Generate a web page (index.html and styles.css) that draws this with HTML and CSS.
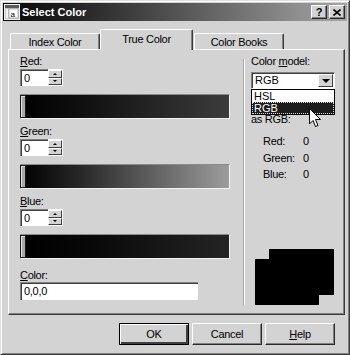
FILE: index.html
```html
<!DOCTYPE html>
<html>
<head>
    <title>Select Color</title>
    <meta charset="UTF-8">
    <link rel="stylesheet" href="styles.css">
</head>
<body>
    <div class="window">
        <div class="titlebar">
            <svg class="app-icon" width="16" height="16" viewBox="0 0 16 16">
                <rect x="0.5" y="0.5" width="15" height="15" fill="#c8c8c8" stroke="#f0f0f0"/>
                <rect x="1" y="1" width="14" height="3" fill="#5a5a5a"/>
                <rect x="2" y="5" width="2" height="9" fill="#f4f4f4"/>
                <rect x="5" y="5" width="9" height="9" fill="#ffffff" stroke="#777" stroke-width="0.5"/>
                <text x="6.5" y="12.5" font-family="Liberation Sans, sans-serif" font-size="8" fill="#000">a</text>
            </svg>
            <span class="title">Select Color</span>
            <div class="title-btns">
                <span class="tbtn">?</span>
                <span class="tbtn">
                    <svg width="8" height="7" viewBox="0 0 8 7"><path d="M0.5 0.5 L7.5 6.5 M7.5 0.5 L0.5 6.5" stroke="#000" stroke-width="1.6"/></svg>
                </span>
            </div>
        </div>

        <div class="tabs">
            <div class="tab">Index Color</div>
            <div class="tab active">True Color</div>
            <div class="tab">Color Books</div>
        </div>

        <div class="panel">
            <div class="left">
                <div class="channel">
                    <div class="field-label"><u>R</u>ed:</div>
                    <div class="spinner">
                        <div class="spin-input">0</div>
                        <div class="spin-btns"><span class="spin up"></span><span class="spin down"></span></div>
                    </div>
                    <div class="bar bar-red"><span class="thumb"></span></div>
                </div>
                <div class="channel">
                    <div class="field-label"><u>G</u>reen:</div>
                    <div class="spinner">
                        <div class="spin-input">0</div>
                        <div class="spin-btns"><span class="spin up"></span><span class="spin down"></span></div>
                    </div>
                    <div class="bar bar-green"><span class="thumb"></span></div>
                </div>
                <div class="channel">
                    <div class="field-label"><u>B</u>lue:</div>
                    <div class="spinner">
                        <div class="spin-input">0</div>
                        <div class="spin-btns"><span class="spin up"></span><span class="spin down"></span></div>
                    </div>
                    <div class="bar bar-blue"><span class="thumb"></span></div>
                </div>
                <div class="field-label color-label"><u>C</u>olor:</div>
                <div class="color-input">0,0,0</div>
            </div>

            <div class="sep"></div>

            <div class="right">
                <div class="field-label">Color <u>m</u>odel:</div>
                <div class="combo-wrap">
                    <div class="combo">
                        <span class="combo-text">RGB</span>
                        <span class="drop-btn"></span>
                    </div>
                    <div class="combo-list">
                        <div class="opt">HSL</div>
                        <div class="opt selected">RGB</div>
                    </div>
                    <svg class="cursor" width="13" height="20" viewBox="0 0 13 20">
                        <path d="M0.5 0.5 L0.5 16 L4 12.5 L6.5 18.5 L9 17.5 L6.5 11.5 L11.5 11.5 Z" fill="#fff" stroke="#000" stroke-width="1"/>
                    </svg>
                </div>
                <div class="as-rgb">as RGB:</div>
                <div class="rgb-values">
                    <span>Red:</span><span>0</span>
                    <span>Green:</span><span>0</span>
                    <span>Blue:</span><span>0</span>
                </div>
                <div class="preview">
                    <div class="swatch swatch-new"></div>
                    <div class="swatch swatch-old"></div>
                </div>
            </div>
        </div>

        <div class="buttons">
            <button class="btn default">OK</button>
            <button class="btn">Cancel</button>
            <button class="btn"><u>H</u>elp</button>
        </div>
    </div>
</body>
</html>
```

FILE: styles.css
```css
* { margin: 0; padding: 0; box-sizing: border-box; }
body { font-family: 'Liberation Sans', Arial, sans-serif; font-size: 11px; letter-spacing: -0.3px; color: #000; background: #d3d3d3; }
u { text-decoration: underline; text-underline-offset: 1px; }

.window { width: 350px; height: 355px; background: #d3d3d3; padding: 2px; border-top: 1px solid #e0e0e0; border-left: 1px solid #e0e0e0; border-right: 1px solid #3a3a3a; border-bottom: 1px solid #3a3a3a; box-shadow: inset 1px 1px #fff, inset -1px -1px #808080; display: flex; flex-direction: column; }

/* title bar */
.titlebar { height: 18px; display: flex; align-items: center; padding: 0 2px 0 1px; background: linear-gradient(to right, #080808, #1e1e1e 18%, #a6a6a6); }
.app-icon { flex: none; }
.title { color: #fff; font-weight: bold; font-size: 11px; letter-spacing: 0; margin-left: 2px; }
.title-btns { margin-left: auto; display: flex; gap: 2px; }
.tbtn { width: 16px; height: 14px; background: #d3d3d3; display: flex; align-items: center; justify-content: center; font-weight: bold; font-size: 11px; letter-spacing: 0; border-top: 1px solid #fff; border-left: 1px solid #fff; border-right: 1px solid #2a2a2a; border-bottom: 1px solid #2a2a2a; box-shadow: inset -1px -1px #808080; }

/* tabs */
.tabs { display: flex; align-items: flex-end; margin-top: 8px; padding-left: 7px; height: 20px; position: relative; z-index: 1; }
.tab { height: 16px; width: 90px; display: flex; align-items: center; justify-content: center; border-top: 1px solid #fff; border-left: 1px solid #fff; border-right: 1px solid #3a3a3a; border-radius: 2px 2px 0 0; box-shadow: inset -1px 0 #808080; padding-top: 1px; }
.tab.active { height: 21px; width: 93px; margin-bottom: -1px; background: #d3d3d3; padding-top: 0; padding-bottom: 3px; }
.tab:last-child { width: 90px; margin-left: 1px; }

/* panel */
.panel { margin: 0 2px 0 5px; height: 266px; display: flex; border-top: 1px solid #fff; border-left: 1px solid #fff; border-right: 1px solid #3a3a3a; border-bottom: 1px solid #3a3a3a; box-shadow: inset -1px -1px #808080; }

.left { width: 234px; padding: 5px 0 0 11px; }
.field-label { height: 13px; line-height: 13px; }
.channel { margin-bottom: 6px; }
.spinner { display: flex; width: 43px; height: 17px; margin-top: 1px; }
.spin-input { width: 28px; height: 17px; background: #fff; border-top: 1px solid #808080; border-left: 1px solid #808080; box-shadow: inset 1px 1px #404040; padding: 2px 0 0 3px; line-height: 12px; }
.spin-btns { width: 15px; display: flex; flex-direction: column; background: #fff; padding: 1px 1px 1px 0; }
.spin { flex: 1; background: #d3d3d3; border-top: 1px solid #fff; border-left: 1px solid #fff; border-right: 1px solid #404040; border-bottom: 1px solid #404040; display: flex; align-items: center; justify-content: center; }
.spin::after { content: ""; border-left: 2px solid transparent; border-right: 2px solid transparent; }
.spin.up::after { border-bottom: 2px solid #000; }
.spin.down::after { border-top: 2px solid #000; }

.bar { width: 210px; height: 25px; margin-top: 8px; display: flex; border-top: 1px solid #8a8a8a; border-left: 1px solid #8a8a8a; border-bottom: 1px solid #f4f4f4; border-right: 1px solid #f4f4f4; }
.bar-red { background: linear-gradient(to right, #000, #101010 30%, #3c3c3c); }
.bar-green { background: linear-gradient(to right, #000, #2a2a2a 30%, #9c9c9c); }
.bar-blue { background: linear-gradient(to right, #000, #070707 30%, #242424); }
.thumb { width: 6px; height: 100%; background: #a8a8a8; border: 1px solid #1a1a1a; box-shadow: inset 1px 1px #e0e0e0; margin-left: -1px; }

.color-label { margin-top: 10px; }
.color-input { width: 178px; height: 18px; background: #fff; border-top: 1px solid #808080; border-left: 1px solid #808080; box-shadow: inset 1px 1px #404040; padding: 2px 0 0 3px; line-height: 13px; }

.sep { width: 2px; margin: 9px 0 8px; border-left: 1px solid #a8a8a8; border-right: 1px solid #fff; }

.right { flex: 1; padding: 5px 0 9px 6px; display: flex; flex-direction: column; }
.combo-wrap { position: relative; margin-top: 4px; width: 84px; }
.combo { height: 17px; display: flex; background: #fff; border-top: 1px solid #808080; border-left: 1px solid #808080; border-right: 1px solid #fff; border-bottom: 1px solid #fff; box-shadow: inset 1px 1px #404040; padding: 1px 1px 1px 2px; }
.combo-text { flex: 1; line-height: 13px; padding-left: 1px; letter-spacing: 0; }
.drop-btn { width: 15px; background: #d3d3d3; border-top: 1px solid #fff; border-left: 1px solid #fff; border-right: 1px solid #404040; border-bottom: 1px solid #404040; display: flex; align-items: center; justify-content: center; }
.drop-btn::after { content: ""; border-left: 4px solid transparent; border-right: 4px solid transparent; border-top: 4px solid #000; }
.combo-list { position: absolute; top: 17px; left: 0; width: 84px; background: #fff; border: 1px solid #000; z-index: 2; }
.opt { height: 12px; line-height: 12px; padding-left: 2px; letter-spacing: 0; }
.opt.selected { background: #1c1c1c; color: #fff; outline: 1px dotted #ddd; outline-offset: -1px; }
.cursor { position: absolute; top: 36px; left: 58px; z-index: 3; }

.as-rgb { margin-top: 24px; height: 13px; line-height: 13px; }
.rgb-values { display: grid; grid-template-columns: 40px auto; margin-top: 7px; padding-left: 12px; line-height: 16.5px; }

.preview { margin-top: auto; margin-left: 4px; width: 79px; height: 56px; display: grid; }
.swatch { grid-area: 1 / 1; background: #000; }
.swatch-new { justify-self: end; align-self: start; width: 65px; height: 46px; }
.swatch-old { justify-self: start; align-self: end; width: 64px; height: 46px; }

/* dialog buttons */
.buttons { display: flex; justify-content: flex-end; gap: 3px; margin-top: 8px; padding-right: 12px; }
.btn { width: 70px; height: 22px; font-family: inherit; font-size: 11px; letter-spacing: -0.3px; background: #d3d3d3; border-top: 1px solid #fff; border-left: 1px solid #fff; border-right: 1px solid #2a2a2a; border-bottom: 1px solid #2a2a2a; box-shadow: inset -1px -1px #808080; }
.btn.default { border: 1px solid #000; box-shadow: inset 1px 1px #fff, inset -2px -2px #404040, inset -1px -1px #808080; }
```
